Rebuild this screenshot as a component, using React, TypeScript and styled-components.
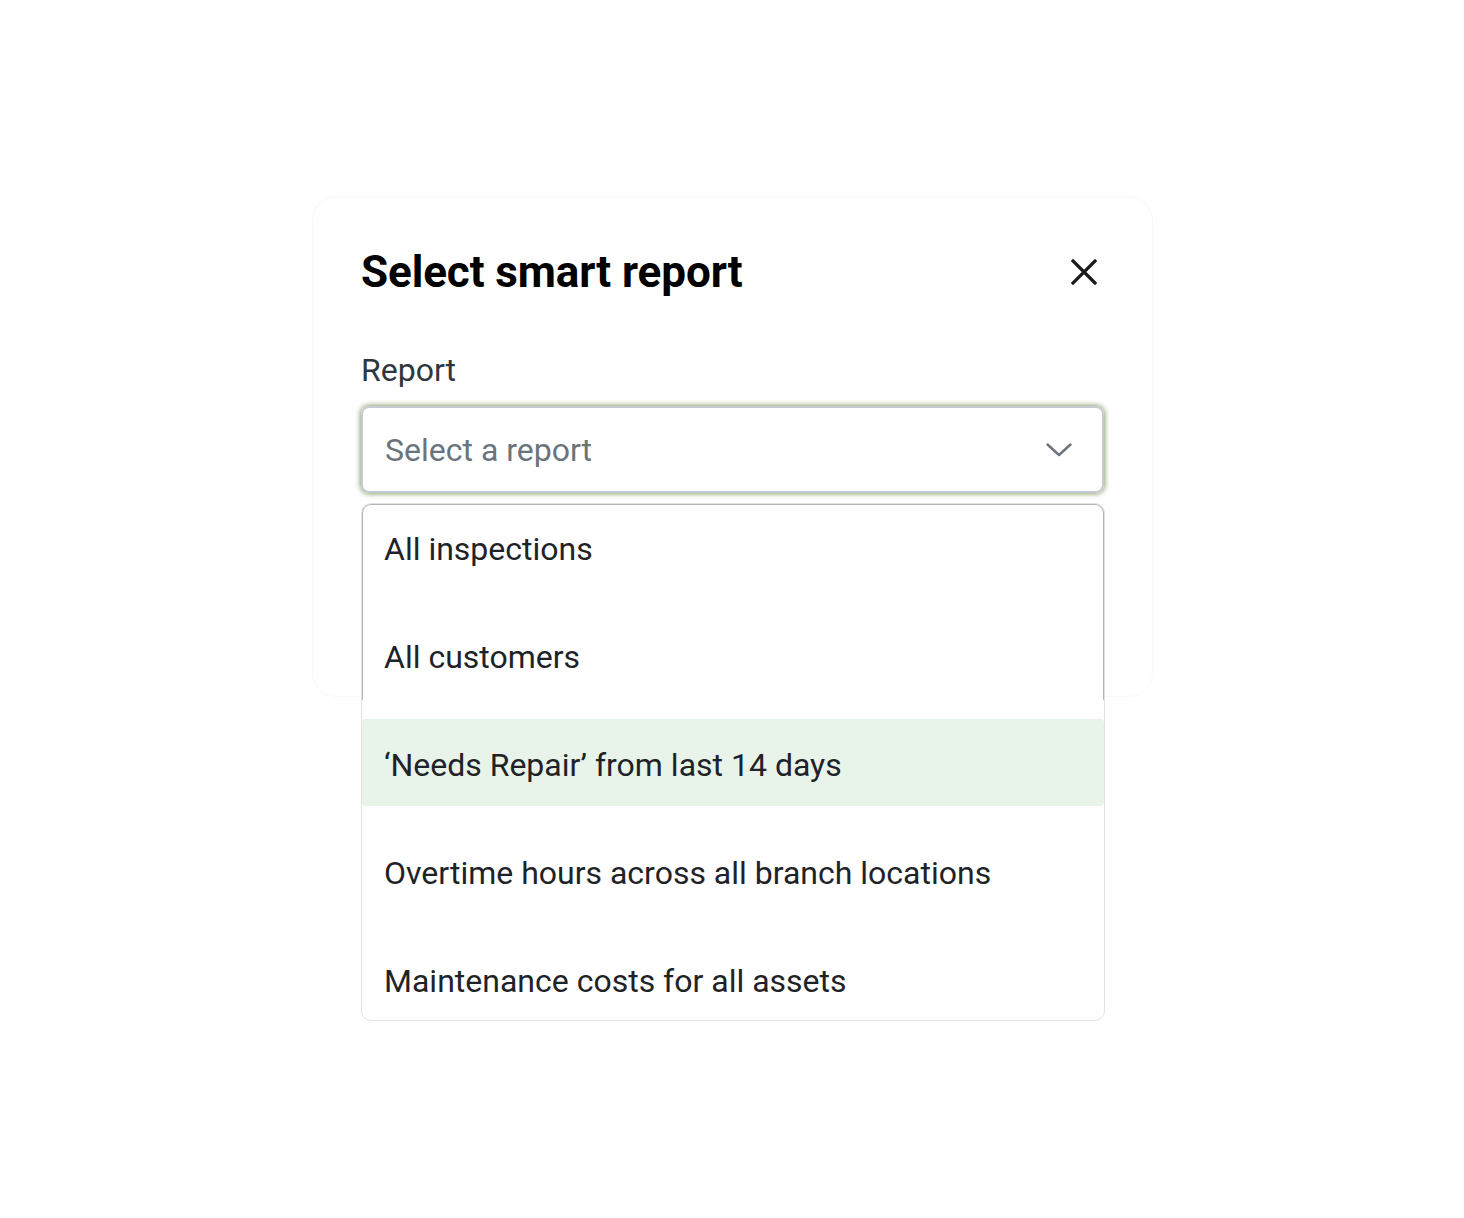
import React from 'react';
import styled, { createGlobalStyle } from 'styled-components';

const GlobalStyle = createGlobalStyle`
  html, body {
    margin: 0;
    padding: 0;
    background: #ffffff;
    font-family: Roboto, "Liberation Sans", sans-serif;
  }
  * {
    box-sizing: border-box;
  }
`;

const Page = styled.div`
  width: 1464px;
  min-height: 1218px;
  display: flex;
  justify-content: flex-start;
  padding: 196px 0 0 312px;
`;

const Modal = styled.div`
  position: relative;
  width: 841px;
  height: 501px;
  border: 1px solid #f9f9f9;
  border-radius: 24px;
  background: #ffffff;
  padding: 44px 48px 0 48px;
`;

const Header = styled.div`
  display: flex;
  align-items: center;
  justify-content: space-between;
  height: 62px;
`;

const Title = styled.h2`
  margin: 0;
  font-size: 44px;
  font-weight: 700;
  color: #000000;
  letter-spacing: -0.1px;
`;

const CloseButton = styled.button`
  border: none;
  background: none;
  padding: 0;
  margin-right: 6px;
  width: 28px;
  height: 28px;
  display: flex;
  align-items: center;
  justify-content: center;
  cursor: pointer;
`;

const Field = styled.div`
  margin-top: 48px;
  display: flex;
  flex-direction: column;
  gap: 17px;
`;

const Label = styled.label`
  font-size: 32px;
  color: #30363c;
  line-height: 38px;
`;

const SelectBox = styled.div`
  height: 87px;
  border: 2px solid #c6cbd2;
  border-radius: 8px;
  box-shadow: 0 0 5px 1px rgba(88, 124, 48, 0.7);
  display: flex;
  align-items: center;
  justify-content: space-between;
  padding: 0 30px 0 22px;
`;

const Placeholder = styled.span`
  font-size: 32px;
  color: #6b747d;
`;

const Dropdown = styled.ul`
  position: absolute;
  left: 48px;
  top: 306px;
  width: 744px;
  height: 518px;
  margin: 0;
  padding: 0;
  list-style: none;
  background: #ffffff;
  border: 1px solid #e2e2e2;
  border-radius: 10px;
  overflow: hidden;
  display: flex;
  flex-direction: column;
  gap: 21px;
  z-index: 2;

  &::before {
    content: '';
    position: absolute;
    left: -1px;
    right: -1px;
    top: -1px;
    height: 195px;
    border: 2px solid #b4b4b4;
    border-bottom: none;
    border-radius: 10px 10px 0 0;
    pointer-events: none;
  }
`;

const Option = styled.li<{ active?: boolean }>`
  flex: 0 0 87px;
  display: flex;
  align-items: center;
  padding: 4px 22px 0;
  font-size: 32px;
  color: #1e2327;
  background: ${p => (p.active ? '#e8f3ea' : 'transparent')};
  border-radius: ${p => (p.active ? '4px' : '0')};
  white-space: nowrap;

  &:first-child {
    margin-top: -1px;
  }
`;

const reports = [
  'All inspections',
  'All customers',
  '\u2018Needs Repair\u2019 from last 14 days',
  'Overtime hours across all branch locations',
  'Maintenance costs for all assets',
];

const App = () => {
  return (
    <>
      <GlobalStyle />
      <Page>
        <Modal>
          <Header>
            <Title>Select smart report</Title>
            <CloseButton aria-label="Close">
              <svg width="26" height="26" viewBox="0 0 26 26" fill="none">
                <path
                  d="M2 2L24 24M24 2L2 24"
                  stroke="#1a1a1a"
                  strokeWidth="3.2"
                  strokeLinecap="square"
                />
              </svg>
            </CloseButton>
          </Header>

          <Field>
            <Label>Report</Label>
            <SelectBox>
              <Placeholder>Select a report</Placeholder>
              <svg width="26" height="14" viewBox="0 0 26 14" fill="none">
                <path
                  d="M1.5 1.5L13 12L24.5 1.5"
                  stroke="#6b747d"
                  strokeWidth="2.4"
                  strokeLinecap="round"
                  strokeLinejoin="round"
                />
              </svg>
            </SelectBox>
          </Field>

          <Dropdown>
            {reports.map((r, i) => (
              <Option key={r} active={i === 2}>
                {r}
              </Option>
            ))}
          </Dropdown>
        </Modal>
      </Page>
    </>
  );
};

export default App;
